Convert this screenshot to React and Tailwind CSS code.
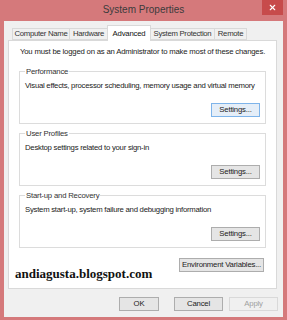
import { X } from "lucide-react";

const font = { fontFamily: '"Liberation Sans", Arial, sans-serif' };

const tabs = [
  { name: "Computer Name", w: "w-[58px]" },
  { name: "Hardware", w: "w-[39px]" },
  { name: "Advanced", w: "w-[44px]" },
  { name: "System Protection", w: "w-[65px]" },
  { name: "Remote", w: "w-[33px]" },
];

const WinButton = ({ children, className = "", focused = false, disabled = false }) => (
  <button
    className={`h-[14px] flex items-center justify-center text-[7.75px] tracking-[-0.2px] leading-none border whitespace-nowrap ${
      disabled
        ? "bg-[#f0f0f0] border-[#d9d9d9] text-[#a0a0a0]"
        : focused
        ? "bg-[#e5eef8] border-[#7eb4ea] text-[#222]"
        : "bg-[#e5e5e5] border-[#adadad] text-[#222]"
    } ${className}`}
  >
    {children}
  </button>
);

const GroupBox = ({ label, text, focused, className = "" }) => (
  <div className={`mx-[10px] border border-[#dcdcdc] h-[53px] px-[5px] pb-[6px] flex flex-col ${className}`}>
    <div className="-mt-[5px] w-fit bg-white px-[1px] text-[7.75px] tracking-[-0.2px] leading-[9px] text-[#333] whitespace-nowrap">
      {label}
    </div>
    <div className="text-[7.75px] tracking-[-0.25px] leading-[9px] text-[#222] mt-[5px] whitespace-nowrap">{text}</div>
    <div className="flex-1" />
    <div className="flex justify-end">
      <WinButton focused={focused} className="w-[49px]">Settings...</WinButton>
    </div>
  </div>
);

export default function App() {
  return (
    <div className="w-[287px] h-[320px] bg-[#d5797b] flex flex-col" style={font}>
      <div className="h-[21px] flex items-start">
        <div className="w-[25px]" />
        <div className="flex-1 text-center text-[10px] text-[#3b3b3b] pt-[5px] leading-none">System Properties</div>
        <div className="w-[21px] h-[15px] mr-[4px] bg-[#c74b4b] flex items-center justify-center">
          <X size={9} strokeWidth={3} color="#fff" />
        </div>
      </div>
      <div className="mx-[4px] h-[296px] bg-[#f0f0f0] flex flex-col pl-[4px] pr-[6px] pt-[4px]">
        <div className="flex items-end h-[15px] pl-[4px] relative z-10">
          {tabs.map((t) =>
            t.name === "Advanced" ? (
              <div
                key={t.name}
                className={`${t.w} h-[16px] -mb-[1px] -ml-[1px] bg-white border border-b-0 border-[#d9d9d9] text-[7.75px] tracking-[-0.2px] text-[#111] flex items-center justify-center leading-none whitespace-nowrap`}
              >
                {t.name}
              </div>
            ) : (
              <div
                key={t.name}
                className={`${t.w} h-[12px] bg-[#f0f0f0] border border-[#d9d9d9] -ml-[1px] first:ml-0 text-[7.75px] tracking-[-0.3px] text-[#333] flex items-center justify-center leading-none whitespace-nowrap`}
              >
                {t.name}
              </div>
            )
          )}
        </div>
        <div className="h-[249px] bg-white border border-[#d9d9d9] flex flex-col">
          <div className="text-[7.75px] tracking-[-0.2px] leading-[9px] text-[#222] mt-[6px] ml-[11px] whitespace-nowrap">
            You must be logged on as an Administrator to make most of these changes.
          </div>
          <GroupBox
            label="Performance"
            text="Visual effects, processor scheduling, memory usage and virtual memory"
            focused
            className="mt-[15px]"
          />
          <GroupBox label="User Profiles" text="Desktop settings related to your sign-in" className="mt-[9px]" />
          <GroupBox
            label="Start-up and Recovery"
            text="System start-up, system failure and debugging information"
            className="mt-[9px]"
          />
          <div className="flex items-start justify-between mt-[10px] pl-[6px] pr-[12px]">
            <div
              className="text-[13px] font-bold text-[#111] leading-none mt-[9px] whitespace-nowrap"
              style={{ fontFamily: '"Liberation Serif", "Times New Roman", serif' }}
            >
              andiagusta.blogspot.com
            </div>
            <WinButton className="w-[85px]">Environment Variables...</WinButton>
          </div>
        </div>
        <div className="flex justify-end gap-[6px] mt-[8px] -mr-[1px]">
          <WinButton className="w-[40px]">OK</WinButton>
          <WinButton className="w-[49px] ml-[9px]">Cancel</WinButton>
          <WinButton disabled className="w-[49px]">Apply</WinButton>
        </div>
      </div>
    </div>
  );
}
